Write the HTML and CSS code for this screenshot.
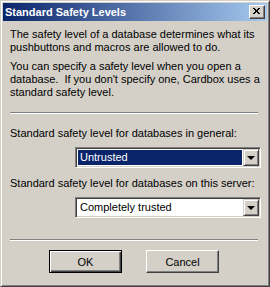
FILE: index.html
```html
<!DOCTYPE html>
<html lang="en">
<head>
    <meta charset="UTF-8">
    <title>Standard Safety Levels</title>
    <link rel="stylesheet" href="styles.css">
</head>
<body>
    <div class="window">
        <div class="titlebar">
            <span class="title-text">Standard Safety Levels</span>
            <div class="close-btn">
                <svg width="8" height="7" viewBox="0 0 8 7">
                    <path d="M0 0 L6 6 M1 0 L7 6 M6 0 L0 6 M7 0 L1 6" stroke="#000" stroke-width="1" shape-rendering="crispEdges"/>
                </svg>
            </div>
        </div>

        <div class="content">
            <p class="intro">The safety level of a database determines what its pushbuttons and macros are allowed to do.</p>
            <p class="intro">You can specify a safety level when you open a database.&nbsp; If you don't specify one, Cardbox uses a standard safety level.</p>

            <div class="separator sep-top"></div>

            <div class="field-label">Standard safety level for databases in general:</div>
            <div class="combo">
                <div class="combo-value selected">Untrusted</div>
                <div class="combo-arrow"><span class="arrow"></span></div>
            </div>

            <div class="field-label label-second">Standard safety level for databases on this server:</div>
            <div class="combo">
                <div class="combo-value">Completely trusted</div>
                <div class="combo-arrow"><span class="arrow"></span></div>
            </div>

            <div class="separator sep-bottom"></div>

            <div class="buttons">
                <div class="btn btn-default"><span>OK</span></div>
                <div class="btn"><span>Cancel</span></div>
            </div>
        </div>
    </div>
</body>
</html>
```

FILE: styles.css
```css
body {
    margin: 0;
    font-family: "Liberation Sans", Arial, sans-serif;
    font-size: 11px;
    color: #000;
}

.window {
    box-sizing: border-box;
    width: 270px;
    height: 287px;
    background: #d4d0c8;
    border: 1px solid;
    border-color: #d4d0c8 #404040 #404040 #d4d0c8;
    box-shadow: inset 1px 1px #fff, inset -1px -1px #808080;
    padding: 2px;
    display: flex;
    flex-direction: column;
}

.titlebar {
    height: 18px;
    display: flex;
    align-items: center;
    justify-content: space-between;
    background: linear-gradient(to right, #0a246a, #a6caf0);
    padding: 0 2px 0 2px;
}

.title-text {
    color: #fff;
    font-weight: bold;
    font-size: 11px;
}

.close-btn {
    box-sizing: border-box;
    width: 16px;
    height: 14px;
    background: #d4d0c8;
    border: 1px solid;
    border-color: #fff #404040 #404040 #fff;
    box-shadow: inset -1px -1px #808080;
    display: flex;
    align-items: center;
    justify-content: center;
    padding: 0 1px 1px 0;
}

.content {
    padding: 7px 7px 0 7px;
    display: flex;
    flex-direction: column;
}

.intro {
    margin: 0 0 6px 0;
    line-height: 13px;
}

.separator {
    height: 1px;
    border-top: 1px solid #808080;
    border-bottom: 1px solid #fff;
    height: 0;
    margin-right: 2px;
}

.sep-top {
    margin-top: 7px;
    margin-bottom: 13px;
}

.field-label {
    line-height: 13px;
    margin-bottom: 7px;
}

.label-second {
    margin-top: 9px;
}

.combo {
    box-sizing: border-box;
    width: 186px;
    height: 21px;
    margin-left: 65px;
    background: #fff;
    border: 1px solid;
    border-color: #808080 #fff #fff #808080;
    box-shadow: inset 1px 1px #404040, inset -1px -1px #d4d0c8;
    padding: 2px;
    display: flex;
}

.combo-value {
    flex: 1;
    line-height: 13px;
    padding: 1px 2px;
    margin-right: 1px;
}

.combo-value.selected {
    background: #0a246a;
    color: #fff;
}

.combo-arrow {
    box-sizing: border-box;
    width: 16px;
    margin: -1px -1px -1px 0;
    background: #d4d0c8;
    border: 1px solid;
    border-color: #d4d0c8 #404040 #404040 #d4d0c8;
    box-shadow: inset 1px 1px #fff, inset -1px -1px #808080;
    display: flex;
    align-items: center;
    justify-content: center;
}

.arrow {
    width: 0;
    height: 0;
    border-left: 4px solid transparent;
    border-right: 4px solid transparent;
    border-top: 4px solid #000;
    margin-left: -1px;
}

.sep-bottom {
    margin-top: 21px;
    margin-bottom: 9px;
}

.buttons {
    display: flex;
    justify-content: center;
    gap: 24px;
    padding-right: 2px;
}

.btn {
    box-sizing: border-box;
    width: 73px;
    height: 23px;
    background: #d4d0c8;
    border: 1px solid;
    border-color: #fff #404040 #404040 #fff;
    box-shadow: inset -1px -1px #808080;
    display: flex;
    align-items: center;
    justify-content: center;
}

.btn-default {
    border: 1px solid #000;
    box-shadow: inset 1px 1px #fff, inset -1px -1px #404040, inset -2px -2px #808080;
}
```
